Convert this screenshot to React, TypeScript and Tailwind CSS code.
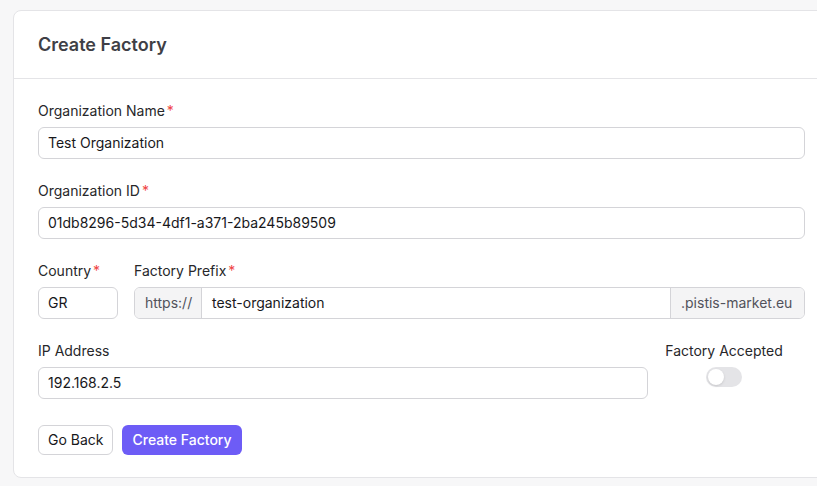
export default function App() {
  const font = { fontFamily: 'Inter, "Liberation Sans", sans-serif' }
  const input =
    'h-8 rounded-md border border-[#d4d4d8] bg-white px-[9px] text-sm text-[#18181b] flex items-center'
  const label = 'text-sm text-[#27272a] mb-[6px] h-5 flex items-center'
  const Req = () => <span className="text-[#ef4444] ml-[2px]">*</span>
  return (
    <div className="h-[486px] w-[817px] overflow-hidden bg-[#f7f7f8] pl-[13px] pt-[10px]" style={font}>
      <div className="w-[830px] h-[468px] rounded-lg border border-[#e4e4e7] bg-white">
        <div className="h-[68px] flex items-center px-6 border-b border-[#e4e4e7]">
          <h1 className="text-lg font-semibold text-[#3f3f46]">Create Factory</h1>
        </div>
        <div className="pl-6 pr-[37px] pt-[22px] flex flex-col gap-[22px]">
          <div>
            <div className={label}>Organization Name<Req /></div>
            <div className={input}>Test Organization</div>
          </div>
          <div>
            <div className={label}>Organization ID<Req /></div>
            <div className={input}>01db8296-5d34-4df1-a371-2ba245b89509</div>
          </div>
          <div className="flex gap-4">
            <div className="w-20">
              <div className={label}>Country<Req /></div>
              <div className={input}>GR</div>
            </div>
            <div className="flex-1">
              <div className={label}>Factory Prefix<Req /></div>
              <div className="flex h-8 text-sm rounded-md border border-[#d4d4d8] overflow-hidden">
                <div className="w-[67px] bg-[#f4f4f5] text-[#52525b] flex items-center px-[10px] border-r border-[#d4d4d8]">https://</div>
                <div className="flex-1 flex items-center px-[10px] text-[#18181b]">test-organization</div>
                <div className="w-[134px] bg-[#f4f4f5] text-[#52525b] flex items-center px-[10px] border-l border-[#d4d4d8]">.pistis-market.eu</div>
              </div>
            </div>
          </div>
          <div className="flex gap-4 items-start">
            <div className="flex-1">
              <div className={label}>IP Address</div>
              <div className={input}>192.168.2.5</div>
            </div>
            <div className="w-[120px] mr-[21px] flex flex-col items-center">
              <div className="text-sm text-[#27272a] h-5 mb-[6px] flex items-center whitespace-nowrap">Factory Accepted</div>
              <div className="w-9 h-5 rounded-full bg-[#e4e4e7] p-[2px]">
                <div className="w-4 h-4 rounded-full bg-white shadow"></div>
              </div>
            </div>
          </div>
          <div className="flex gap-[9px] pt-1">
            <button className="h-[30px] px-[9px] rounded-md border border-[#d4d4d8] bg-white text-sm text-[#18181b]">Go Back</button>
            <button className="h-[30px] px-[10px] rounded-md bg-[#6d5cf6] text-sm font-medium text-white">Create Factory</button>
          </div>
        </div>
      </div>
    </div>
  )
}
